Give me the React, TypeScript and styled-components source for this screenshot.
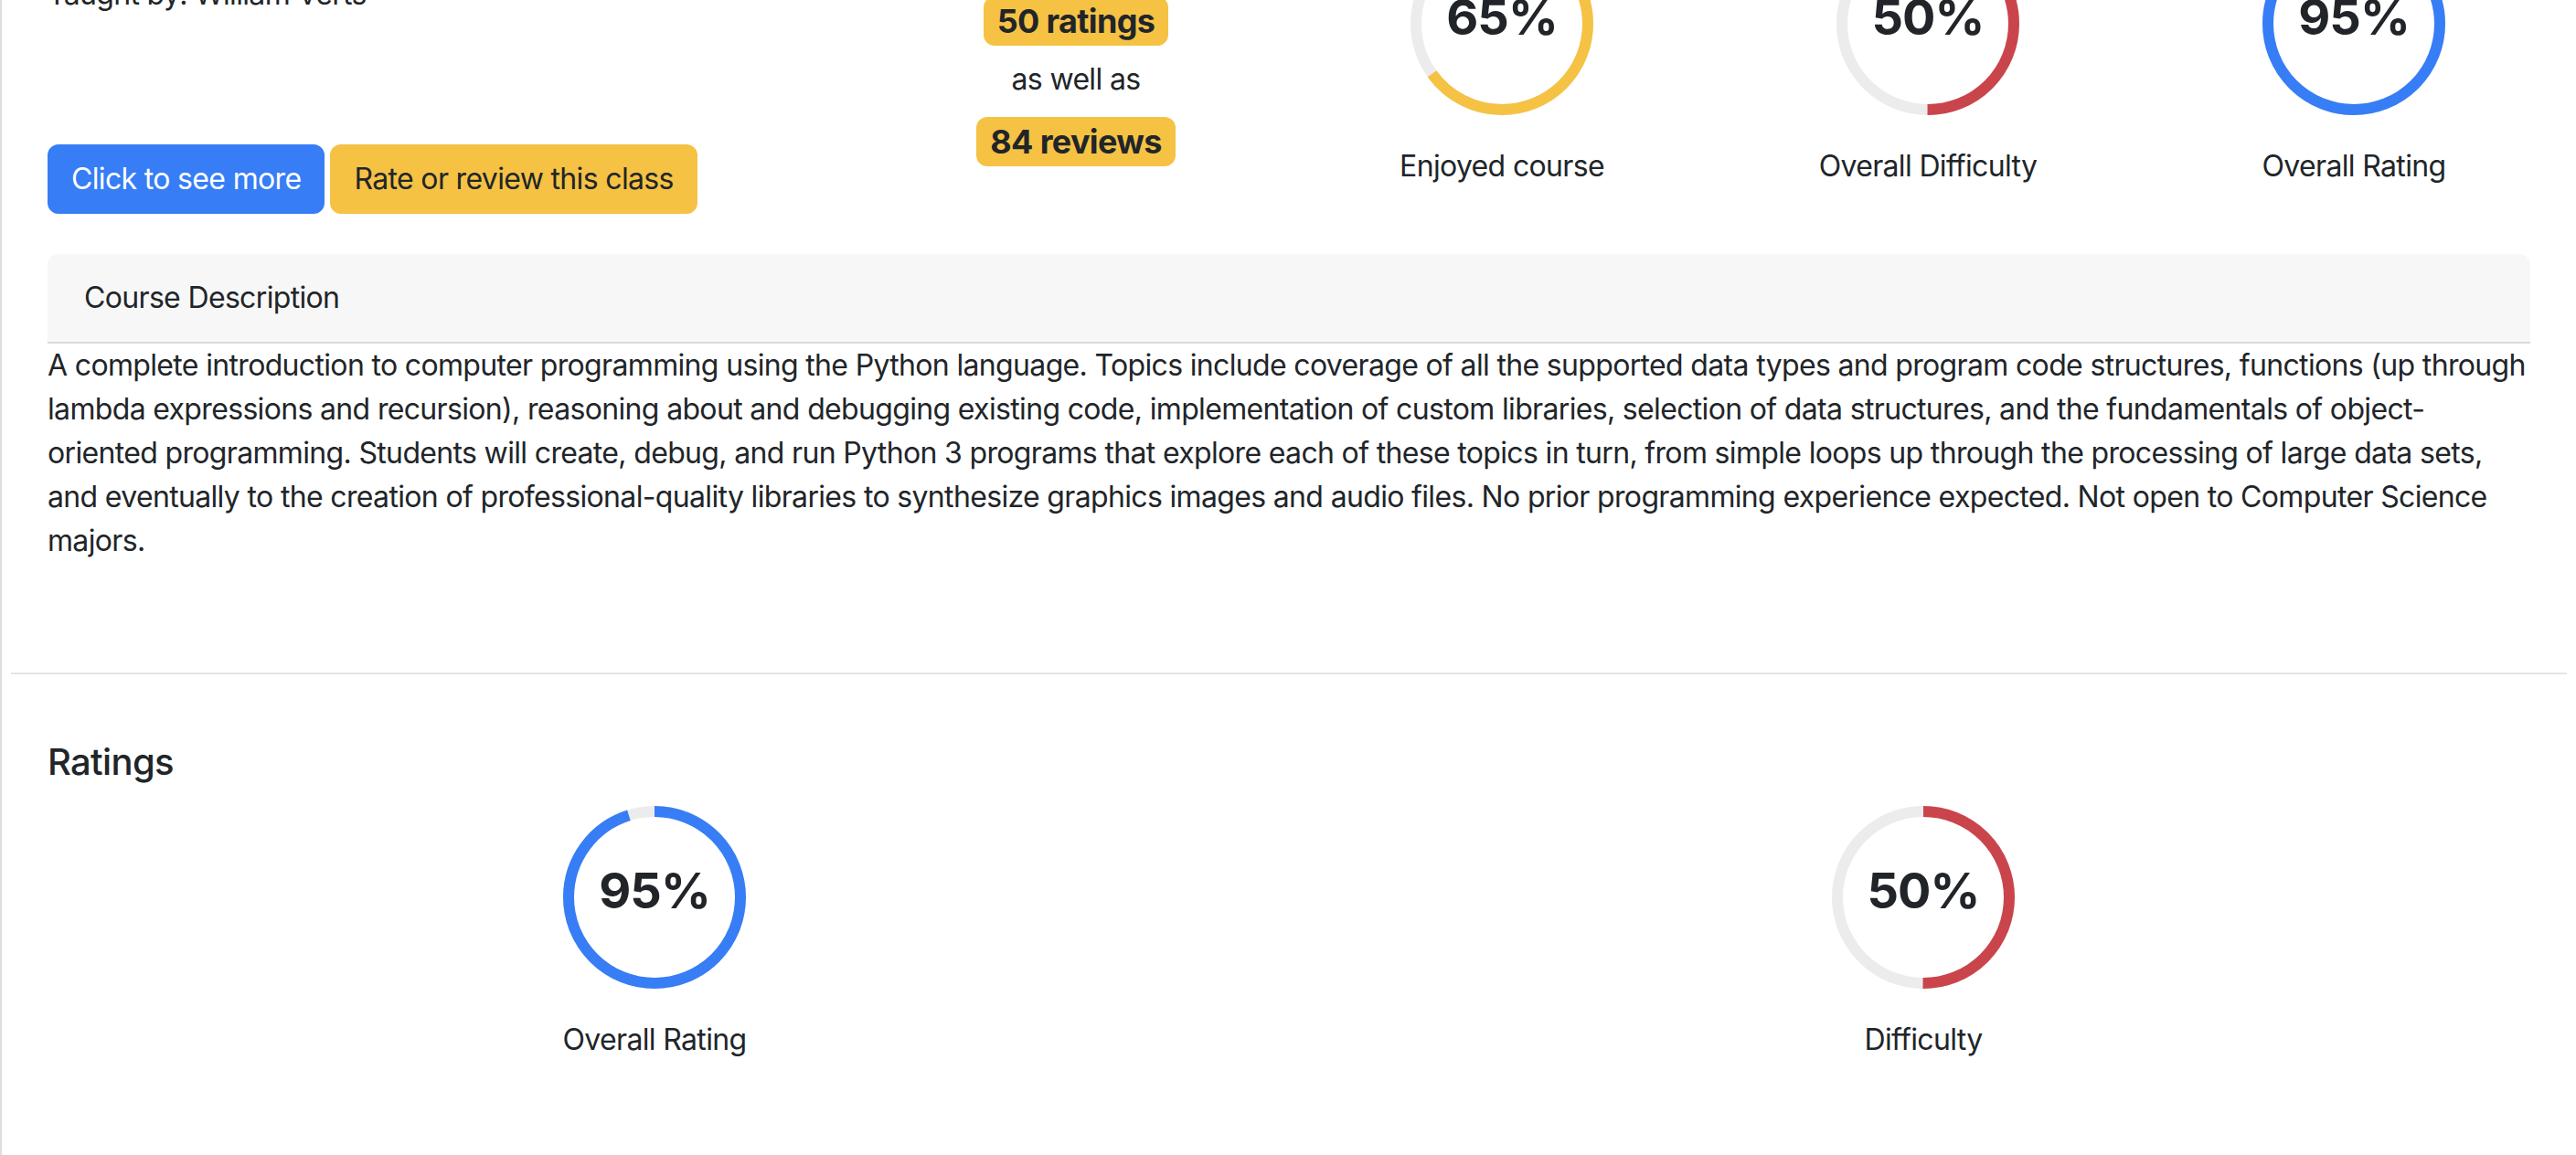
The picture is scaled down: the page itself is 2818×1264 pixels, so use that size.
import styled, { createGlobalStyle } from 'styled-components';

const GlobalStyle = createGlobalStyle`
  html, body {
    margin: 0;
    padding: 0;
    background: #fff;
  }
  body {
    font-family: Inter, "Noto Sans", sans-serif;
    font-size: 32px;
    line-height: 1.5;
    letter-spacing: -0.66px;
    color: #212529;
    overflow: hidden;
  }
  * {
    box-sizing: border-box;
  }
`;

// page is shown scrolled down a little, the course title sits above the fold
const Page = styled.div`
  min-height: 1400px;
  margin-top: -74px;
  border-left: 2px solid #dedede;
`;

const Container = styled.div`
  padding: 0 50px;
`;

const TopRow = styled.div`
  display: grid;
  grid-template-columns: 897px 461px repeat(3, 466px);
  align-items: start;
  margin-right: -40px;
`;

const InfoCol = styled.div`
  padding-top: 44px;
`;

const Taught = styled.div`
  line-height: 48px;
`;

const ButtonRow = styled.div`
  display: flex;
  gap: 6px;
  margin-top: 140px;
`;

const Button = styled.button<{ $variant: 'primary' | 'warning' }>`
  font: inherit;
  letter-spacing: inherit;
  line-height: 48px;
  padding: 12px 24px;
  border-radius: 12px;
  border: 2px solid ${p => (p.$variant === 'primary' ? '#377df6' : '#f5c244')};
  background: ${p => (p.$variant === 'primary' ? '#377df6' : '#f5c244')};
  color: ${p => (p.$variant === 'primary' ? '#fff' : '#212529')};
  cursor: pointer;
`;

const CountCol = styled.div`
  display: flex;
  flex-direction: column;
  align-items: center;
  padding-top: 70px;
  padding-right: 5px;
`;

const CountBadge = styled.span`
  display: inline-block;
  background: #f5c244;
  color: #212529;
  font-weight: 700;
  font-size: 36px;
  line-height: 36px;
  padding: 9px 15px;
  border-radius: 12px;
`;

const Joiner = styled.div`
  margin: 13px 0 17px;
  line-height: 48px;
`;

const Stat = styled.div`
  display: flex;
  flex-direction: column;
  align-items: center;
`;

const RingWrap = styled.div`
  position: relative;
  width: 200px;
  height: 200px;
`;

const RingValue = styled.div`
  position: absolute;
  inset: 0;
  display: flex;
  align-items: center;
  justify-content: center;
  padding-bottom: 14px;
  font-size: 54px;
  font-weight: 700;
  line-height: 1;
  letter-spacing: -1px;
`;

const StatLabel = styled.div`
  margin-top: 32px;
  line-height: 48px;
`;

const Card = styled.section`
  margin-top: 44px;
`;

const CardHeader = styled.div`
  background: #f7f7f7;
  border-bottom: 2px solid #dadada;
  border-radius: 12px 12px 0 0;
  padding: 24px 40px;
  line-height: 48px;
`;

const Description = styled.p`
  margin: 0;
  line-height: 48px;
`;

const Divider = styled.hr`
  margin: 120px 10px 0;
  border: 0;
  border-top: 2px solid #e4e4e4;
`;

const SectionTitle = styled.h5`
  margin: 72px 0 0;
  font-size: 40px;
  font-weight: 500;
  line-height: 48px;
`;

const BottomRow = styled.div`
  display: grid;
  grid-template-columns: 1fr 1fr;
  margin: 24px -30px 0;
`;

const Ring = ({ value, color }: { value: number; color: string }) => {
  const r = 94;
  const c = 2 * Math.PI * r;
  return (
    <svg width="200" height="200" viewBox="0 0 200 200">
      <circle cx="100" cy="100" r={r} fill="none" stroke="#ececec" strokeWidth="12" />
      <circle
        cx="100"
        cy="100"
        r={r}
        fill="none"
        stroke={color}
        strokeWidth="12"
        strokeDasharray={`${(c * value) / 100} ${c}`}
        transform="rotate(-90 100 100)"
      />
    </svg>
  );
};

const StatRing = ({ value, color, label }: { value: number; color: string; label: string }) => (
  <Stat>
    <RingWrap>
      <Ring value={value} color={color} />
      <RingValue>{value}%</RingValue>
    </RingWrap>
    <StatLabel>{label}</StatLabel>
  </Stat>
);

export default function App() {
  return (
    <>
      <GlobalStyle />
      <Page>
        <Container>
          <TopRow>
            <InfoCol>
              <Taught>Taught by: William Verts</Taught>
              <ButtonRow>
                <Button $variant="primary">Click to see more</Button>
                <Button $variant="warning">Rate or review this class</Button>
              </ButtonRow>
            </InfoCol>
            <CountCol>
              <CountBadge>50 ratings</CountBadge>
              <Joiner>as well as</Joiner>
              <CountBadge>84 reviews</CountBadge>
            </CountCol>
            <StatRing value={65} color="#f5c244" label="Enjoyed course" />
            <StatRing value={50} color="#c9454b" label="Overall Difficulty" />
            <StatRing value={95} color="#377df6" label="Overall Rating" />
          </TopRow>
          <Card>
            <CardHeader>Course Description</CardHeader>
            <Description>
              A complete introduction to computer programming using the Python language. Topics include coverage of all
              the supported data types and program code structures, functions (up through lambda expressions and
              recursion), reasoning about and debugging existing code, implementation of custom libraries, selection of
              data structures, and the fundamentals of object-oriented programming. Students will create, debug, and run
              Python 3 programs that explore each of these topics in turn, from simple loops up through the processing of
              large data sets, and eventually to the creation of professional-quality libraries to synthesize graphics
              images and audio files. No prior programming experience expected. Not open to Computer Science majors.
            </Description>
          </Card>
        </Container>
        <Divider />
        <Container>
          <SectionTitle>Ratings</SectionTitle>
          <BottomRow>
            <StatRing value={95} color="#377df6" label="Overall Rating" />
            <StatRing value={50} color="#c9454b" label="Difficulty" />
          </BottomRow>
        </Container>
      </Page>
    </>
  );
}
